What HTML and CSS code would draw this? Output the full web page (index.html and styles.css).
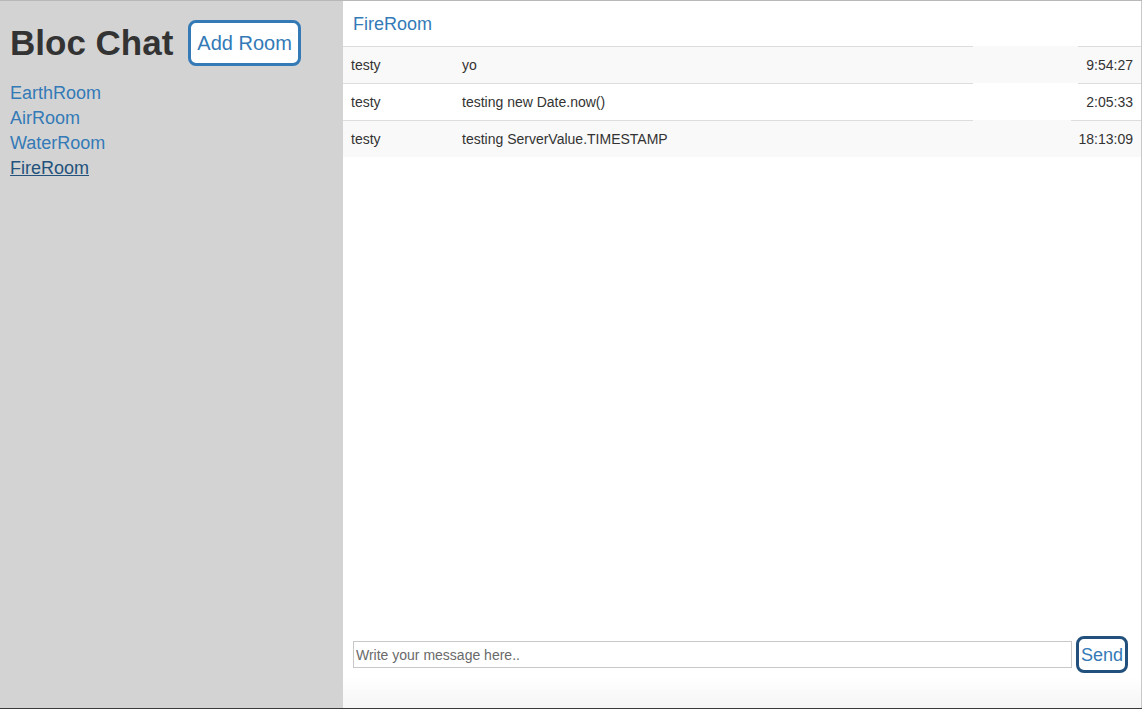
FILE: index.html
```html
<!DOCTYPE html>
<html>
<head>
<meta charset="utf-8">
<title>Bloc Chat</title>
<link rel="stylesheet" href="styles.css">
</head>
<body>
<div class="app">
  <aside class="sidebar">
    <div class="brand">
      <h1 class="title">Bloc Chat</h1>
      <button class="add-room">Add Room</button>
    </div>
    <ul class="rooms">
      <li><a class="room" href="#">EarthRoom</a></li>
      <li><a class="room" href="#">AirRoom</a></li>
      <li><a class="room" href="#">WaterRoom</a></li>
      <li><a class="room active" href="#">FireRoom</a></li>
    </ul>
  </aside>
  <main class="main">
    <div class="room-header"><a class="room-name" href="#">FireRoom</a></div>
    <div class="messages">
      <div class="msg striped">
        <div class="cell user">testy</div>
        <div class="cell content">yo</div>
        <div class="gap"></div>
        <div class="cell time">9:54:27</div>
      </div>
      <div class="msg">
        <div class="cell user">testy</div>
        <div class="cell content">testing new Date.now()</div>
        <div class="gap"></div>
        <div class="cell time">2:05:33</div>
      </div>
      <div class="msg striped">
        <div class="cell user">testy</div>
        <div class="cell content">testing ServerValue.TIMESTAMP</div>
        <div class="gap"></div>
        <div class="cell time">18:13:09</div>
      </div>
    </div>
    <form class="composer">
      <input class="msg-input" type="text" placeholder="Write your message here..">
      <button class="send" type="button">Send</button>
    </form>
  </main>
</div>
</body>
</html>
```

FILE: styles.css
```css
* { box-sizing: border-box; }
html, body { margin: 0; padding: 0; }
body {
  font-family: "Liberation Sans", Arial, Helvetica, sans-serif;
  font-size: 14px;
  line-height: 20px;
  color: #333;
  background: #fff;
}
.app {
  display: flex;
  height: 709px;
  border-top: 1px solid #b8b8b8;
  border-bottom: 1px solid #3a3a3a;
}
.sidebar {
  width: 343px;
  flex: 0 0 343px;
  background: #d3d3d3;
  padding: 0 10px;
}
.brand {
  display: flex;
  align-items: center;
  gap: 15px;
  padding-top: 19px;
}
.title {
  margin: 0;
  font-size: 35px;
  font-weight: bold;
  line-height: 46px;
  color: #333;
}
.add-room {
  height: 46px;
  padding: 0 6px;
  border: 3px solid #337ab7;
  border-radius: 8px;
  background: #fff;
  color: #337ab7;
  font-family: "Liberation Sans", Arial, sans-serif;
  font-size: 20px;
  line-height: 20px;
}
.rooms {
  list-style: none;
  margin: 15px 0 0;
  padding: 0;
}
.rooms li {
  font-size: 18px;
  line-height: 25px;
}
.room {
  color: #337ab7;
  text-decoration: none;
}
.room.active {
  color: #23527c;
  text-decoration: underline;
}
.main {
  flex: 1;
  display: flex;
  flex-direction: column;
  border-right: 1px solid #c8c8c8;
  background: linear-gradient(to bottom, #fff calc(100% - 30px), #f5f5f5 100%);
}
.room-header {
  height: 45px;
  display: flex;
  align-items: center;
  padding: 0 10px;
}
.room-name {
  font-size: 18px;
  color: #337ab7;
  text-decoration: none;
}
.messages {
  flex: 1;
}
.msg {
  display: flex;
  background: #fff;
}
.msg.striped {
  background: #f9f9f9;
}
.cell {
  padding: 8px;
  border-top: 1px solid #ddd;
  line-height: 20px;
  white-space: nowrap;
}
.user { width: 111px; flex: 0 0 111px; }
.content { width: 519px; flex: 0 0 519px; }
.gap { flex: 1; }
.time { text-align: right; }
.composer {
  display: flex;
  align-items: center;
  gap: 4px;
  padding: 0 0 35px 10px;
  margin: 0;
}
.msg-input {
  width: 719px;
  height: 27px;
  border: 1px solid #c8c8c8;
  padding: 0 2px;
  font-family: "Liberation Sans", Arial, sans-serif;
  font-size: 14px;
  color: #333;
  background: #fff;
  outline: none;
}
.msg-input::placeholder { color: #6a6a6a; }
.send {
  width: 52px;
  height: 37px;
  padding: 0;
  border: 3px solid #22507d;
  border-radius: 8px;
  background: #fff;
  color: #337ab7;
  font-family: "Liberation Sans", Arial, sans-serif;
  font-size: 18px;
  line-height: 20px;
}
```
